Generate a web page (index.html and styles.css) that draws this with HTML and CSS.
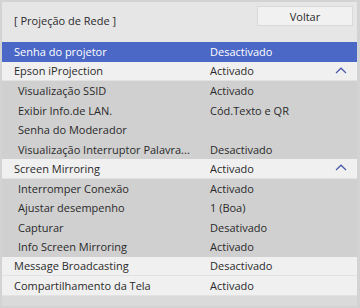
FILE: index.html
```html
<!DOCTYPE html>
<html lang="pt">
<head>
<meta charset="utf-8">
<link rel="stylesheet" href="styles.css">
</head>
<body>
<div class="frame">
  <div class="header">
    <span class="title">[ Projeção de Rede ]</span>
    <button class="back">Voltar</button>
  </div>
  <div class="list">
    <div class="row main selected"><span class="label">Senha do projetor</span><span class="value">Desactivado</span><span class="icon"></span></div>
    <div class="row main"><span class="label">Epson iProjection</span><span class="value">Activado</span><span class="icon"><svg width="12" height="7" viewBox="0 0 12 7"><path d="M1 6 L6 1.2 L11 6" fill="none" stroke="#4858a8" stroke-width="1.2"/></svg></span></div>
    <div class="row sub"><span class="label">Visualização SSID</span><span class="value">Activado</span><span class="icon"></span></div>
    <div class="row sub"><span class="label">Exibir Info.de LAN.</span><span class="value">Cód.Texto e QR</span><span class="icon"></span></div>
    <div class="row sub"><span class="label">Senha do Moderador</span><span class="value"></span><span class="icon"></span></div>
    <div class="row sub"><span class="label">Visualização Interruptor Palavra...</span><span class="value">Desactivado</span><span class="icon"></span></div>
    <div class="row main"><span class="label">Screen Mirroring</span><span class="value">Activado</span><span class="icon"><svg width="12" height="7" viewBox="0 0 12 7"><path d="M1 6 L6 1.2 L11 6" fill="none" stroke="#4858a8" stroke-width="1.2"/></svg></span></div>
    <div class="row sub"><span class="label">Interromper Conexão</span><span class="value">Activado</span><span class="icon"></span></div>
    <div class="row sub"><span class="label">Ajustar desempenho</span><span class="value">1 (Boa)</span><span class="icon"></span></div>
    <div class="row sub"><span class="label">Capturar</span><span class="value">Desativado</span><span class="icon"></span></div>
    <div class="row sub"><span class="label">Info Screen Mirroring</span><span class="value">Activado</span><span class="icon"></span></div>
    <div class="row main"><span class="label">Message Broadcasting</span><span class="value">Desactivado</span><span class="icon"></span></div>
    <div class="row main"><span class="label">Compartilhamento da Tela</span><span class="value">Activado</span><span class="icon"></span></div>
  </div>
</div>
</body>
</html>
```

FILE: styles.css
```css
* { box-sizing: border-box; }
html, body { margin: 0; padding: 0; }
body {
  width: 360px;
  height: 308px;
  font-family: "Open Sans", "Noto Sans", sans-serif;
  font-size: 11px;
  color: #2a2a2a;
}
.frame {
  width: 360px;
  height: 308px;
  border: 2px solid #d3d3d3;
  border-right-width: 3px;
  background: #dadada;
  display: flex;
  flex-direction: column;
}
.header {
  height: 40px;
  background: #e6e6e6;
  display: flex;
  align-items: flex-start;
  justify-content: space-between;
  padding: 4px 4px 0 12px;
}
.title {
  margin-top: 7px;
  line-height: 15px;
}
.back {
  width: 96px;
  height: 20px;
  margin: 0;
  padding: 0;
  font: inherit;
  color: #2a2a2a;
  background: #f1f1f1;
  border: 1px solid #d9d9d9;
}
.list {
  display: flex;
  flex-direction: column;
}
.row {
  height: 19.5px;
  display: grid;
  grid-template-columns: 208px 1fr 22px;
  align-items: center;
  line-height: 15px;
  white-space: nowrap;
}
.row .label { padding-left: 12px; }
.row.sub .label { padding-left: 16px; }
.row.main {
  background: #f0f0f0;
  border-bottom: 1px solid #e2e2e2;
}
.row.sub { background: #d0d0d0; }
.row.selected {
  background: #4b68c7;
  color: #ffffff;
  border-bottom: none;
}
.icon {
  display: flex;
  align-items: center;
  justify-content: flex-start;
  height: 100%;
  padding-bottom: 1px;
}
.icon svg { display: block; }
```
